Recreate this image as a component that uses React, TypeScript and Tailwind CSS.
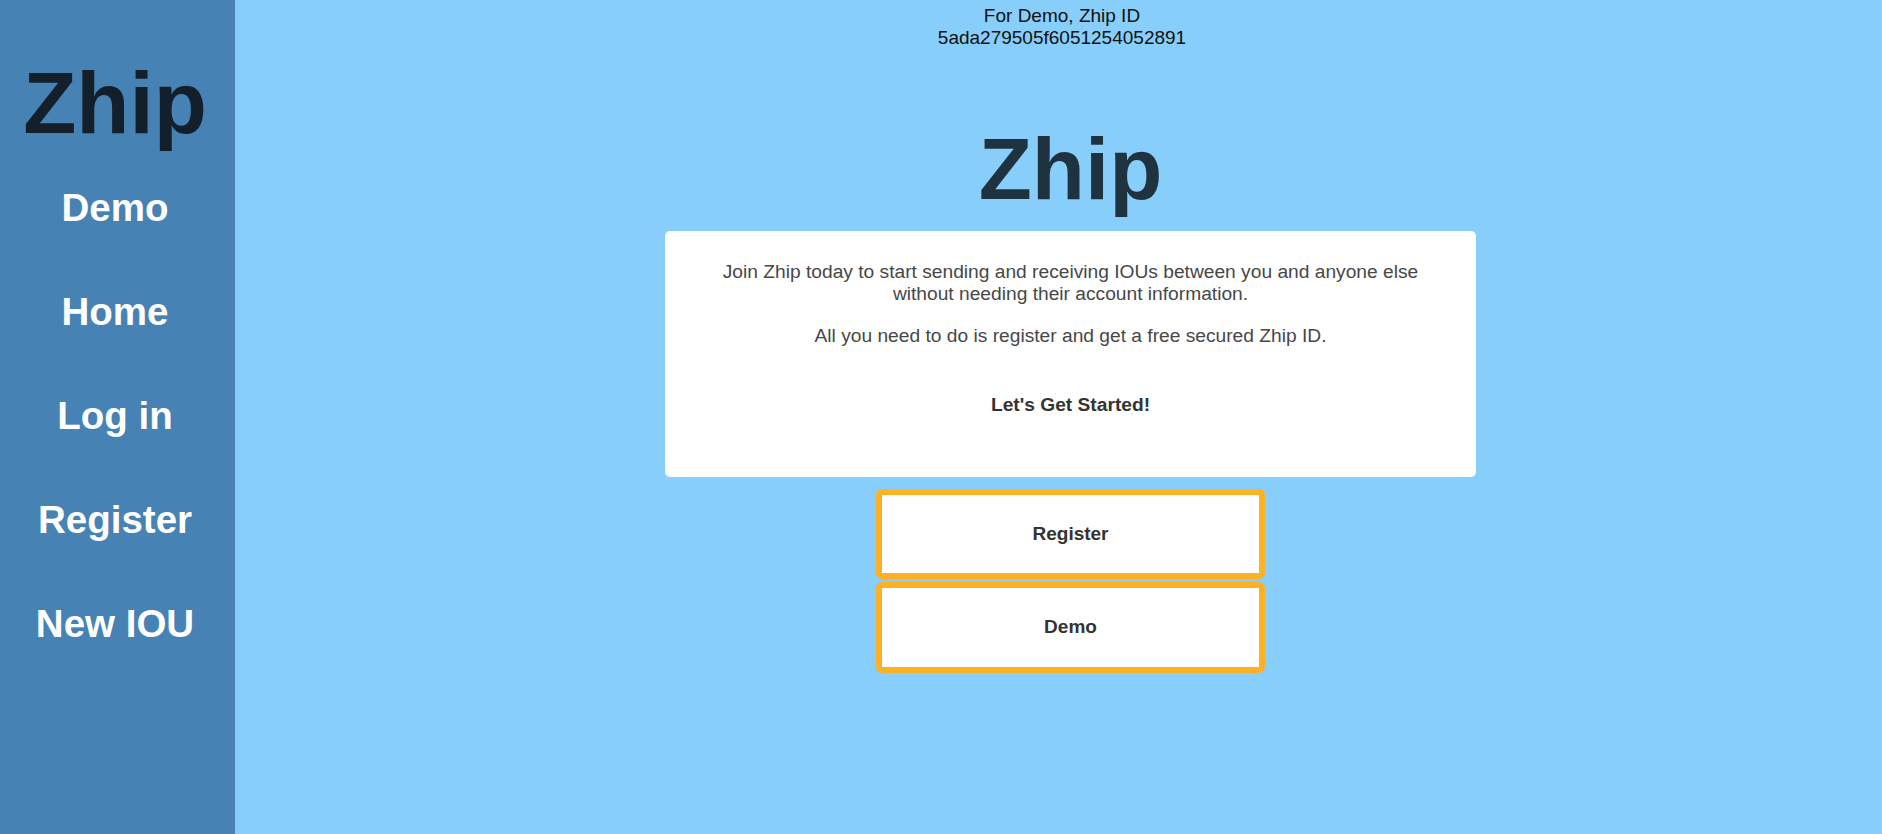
import React from "react";

const font = { fontFamily: '"Liberation Sans", Arial, sans-serif' };

export default function App() {
  const nav = ["Demo", "Home", "Log in", "Register", "New IOU"];
  return (
    <div
      className="flex w-[1882px] h-[834px] overflow-hidden font-['Liberation_Sans',Arial,sans-serif]"
      style={font}
    >
      <aside className="w-[235px] shrink-0 bg-[#4682b4] flex flex-col items-center pt-[53px] pr-[5px]">
        <div className="text-[87px] leading-[100px] font-bold text-[#13202c]">Zhip</div>
        <div className="pt-[3px] flex flex-col items-center">
          {nav.map((n) => (
            <a
              key={n}
              href="#"
              className="block text-[38.5px] leading-[104px] font-bold text-white whitespace-nowrap"
            >
              {n}
            </a>
          ))}
        </div>
      </aside>
      <main className="flex-1 bg-[#87cefa] flex flex-col items-center">
        <div className="ml-[7px] pt-[5px] text-center text-[19px] leading-[22px] text-[#111]">
          <div>For Demo, Zhip ID</div>
          <div>5ada279505f6051254052891</div>
        </div>
        <div className="ml-[24px] flex flex-col items-center">
          <h1 className="mt-[70px] text-[87px] leading-[100px] font-bold text-[#1f3240]">Zhip</h1>
          <div className="mt-[12px] w-[811px] h-[246px] bg-white rounded-[5px] px-[48px] pt-[30px] text-center text-[19.2px] leading-[22px] text-[#474747]">
            <p>
              Join Zhip today to start sending and receiving IOUs between you and anyone else
              without needing their account information.
            </p>
            <p className="mt-[20px]">All you need to do is register and get a free secured Zhip ID.</p>
            <p className="mt-[47px] font-bold text-[#333]">Let's Get Started!</p>
          </div>
          <div className="mt-[12px] flex flex-col gap-[3px]">
            <button className="w-[389px] h-[90px] bg-white border-[6px] border-[#ffb124] rounded-[6px] text-[19px] font-bold text-[#333]">
              Register
            </button>
            <button className="w-[389px] h-[91px] bg-white border-[6px] border-[#ffb124] rounded-[6px] text-[19px] font-bold text-[#333]">
              Demo
            </button>
          </div>
        </div>
      </main>
    </div>
  );
}
